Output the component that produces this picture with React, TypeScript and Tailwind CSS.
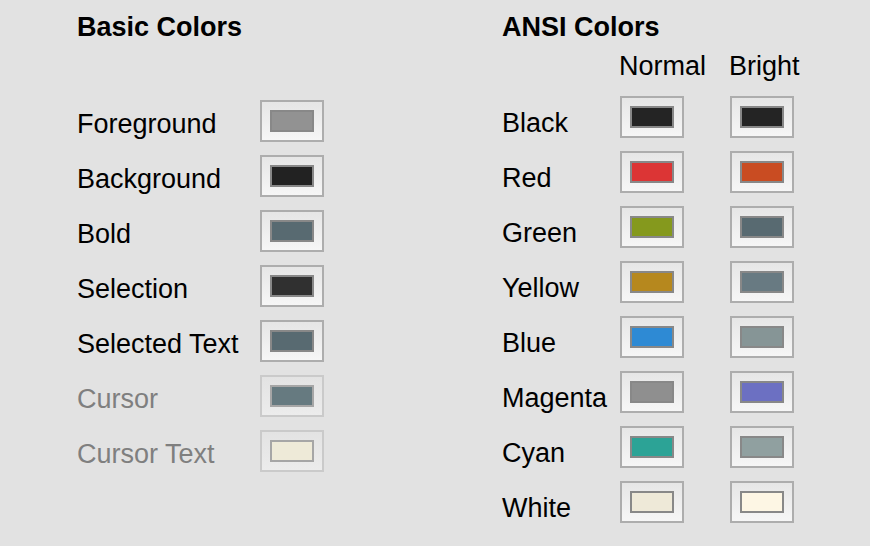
const basic = [
  { name: "Foreground", color: "#929292" },
  { name: "Background", color: "#222222" },
  { name: "Bold", color: "#586a71" },
  { name: "Selection", color: "#303030" },
  { name: "Selected Text", color: "#586a71" },
  { name: "Cursor", color: "#667a80", disabled: true },
  { name: "Cursor Text", color: "#eeead8", disabled: true },
]

const ansi = [
  { name: "Black", normal: "#242424", bright: "#242424" },
  { name: "Red", normal: "#dc3535", bright: "#c94c22" },
  { name: "Green", normal: "#85991d", bright: "#586a71" },
  { name: "Yellow", normal: "#b6881e", bright: "#687a82" },
  { name: "Blue", normal: "#2e8ad4", bright: "#869596" },
  { name: "Magenta", normal: "#8f8f8f", bright: "#6c70c2" },
  { name: "Cyan", normal: "#2ca396", bright: "#90a0a0" },
  { name: "White", normal: "#eee9d8", bright: "#fdf6e4" },
]

function Well({ color, disabled }: { color: string; disabled?: boolean }) {
  return (
    <div
      className={
        disabled
          ? "w-[64px] h-[42px] p-[8px] border-2 border-[#cacaca] bg-gradient-to-b from-[#e3e3e3] to-[#ececec]"
          : "w-[64px] h-[42px] p-[8px] border-2 border-[#adadad] bg-gradient-to-b from-[#e6e6e6] to-[#f6f6f6]"
      }
    >
      <div
        className={disabled ? "w-full h-full border-2 border-[#a6a6a6]" : "w-full h-full border-2 border-[#888888]"}
        style={{ backgroundColor: color }}
      />
    </div>
  )
}

export default function App() {
  return (
    <div className="w-[870px] h-[546px] bg-[#e2e2e2] flex font-['Liberation_Sans',Arial,sans-serif] text-[27px] leading-[31px] text-black overflow-hidden">
        <div className="pl-[77px] pt-[12px] w-[502px]">
            <h2 className="font-bold">Basic Colors</h2>
            <div className="flex flex-col gap-[13px] mt-[57px] w-[247px]">
                {basic.map((b) => (
                    <div key={b.name} className="flex items-center justify-between h-[42px]">
                        <span className={b.disabled ? "text-[#7f7f7f] mt-[6px]" : "mt-[6px]"}>{b.name}</span>
                        <Well color={b.color} disabled={b.disabled} />
                    </div>
                ))}
            </div>
        </div>

        <div className="pt-[12px]">
            <h2 className="font-bold">ANSI Colors</h2>
            <div className="grid grid-cols-[117px_110px_64px] mt-[8px]">
                <span />
                <span>Normal</span>
                <span>Bright</span>
            </div>
            <div className="grid grid-cols-[118px_110px_64px] gap-y-[13px] mt-[14px]">
                {ansi.map((a) => (
                    <div key={a.name} className="contents">
                        <span className="flex items-center h-[42px] pt-[12px]">{a.name}</span>
                        <Well color={a.normal} />
                        <Well color={a.bright} />
                    </div>
                ))}
            </div>
        </div>
    </div>
  )
}
